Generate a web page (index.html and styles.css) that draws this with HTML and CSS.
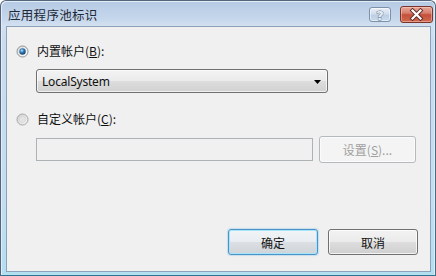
FILE: index.html
```html
<!DOCTYPE html>
<html>
<head>
<meta charset="utf-8">
<link rel="stylesheet" href="styles.css">
</head>
<body>
<div class="window">
  <div class="titlebar">
    <span class="title">应用程序池标识</span>
    <div class="caption-btns">
      <div class="cap help">
        <svg width="22" height="15" viewBox="0 0 22 15"><text x="11" y="12.5" text-anchor="middle" class="qmark">?</text></svg>
      </div>
      <div class="cap close">
        <svg width="33" height="17" viewBox="0 0 33 17"><path d="M12.5 4.5 L20.5 12.5 M20.5 4.5 L12.5 12.5" stroke="#5a2a24" stroke-width="4" stroke-linecap="square"/><path d="M12.5 4.5 L20.5 12.5 M20.5 4.5 L12.5 12.5" stroke="#ffffff" stroke-width="2.2" stroke-linecap="square"/></svg>
      </div>
    </div>
  </div>
  <div class="client">
    <div class="opt-row first">
      <svg class="radio" width="13" height="13" viewBox="0 0 13 13">
        <defs>
          <linearGradient id="rbg" x1="0" y1="0" x2="1" y2="1"><stop offset="0" stop-color="#d9d9d9"/><stop offset="1" stop-color="#ffffff"/></linearGradient>
          <radialGradient id="dot" cx="0.4" cy="0.35" r="0.7"><stop offset="0" stop-color="#bfe3f7"/><stop offset="0.45" stop-color="#2d76b5"/><stop offset="1" stop-color="#153e67"/></radialGradient>
        </defs>
        <circle cx="6.5" cy="6.5" r="5.5" fill="url(#rbg)" stroke="#8e9093"/>
        <circle cx="6.5" cy="6.5" r="3.2" fill="url(#dot)"/>
      </svg>
      <span class="label">内置帐户(<u>B</u>):</span>
    </div>
    <div class="combo">
      <span class="combo-text">LocalSystem</span>
      <svg width="7" height="4" viewBox="0 0 7 4"><path d="M0 0 H7 L3.5 4 Z" fill="#000"/></svg>
    </div>
    <div class="opt-row second">
      <svg class="radio" width="13" height="13" viewBox="0 0 13 13">
        <defs>
          <linearGradient id="rbg2" x1="0" y1="0" x2="1" y2="1"><stop offset="0" stop-color="#cfcfcf"/><stop offset="1" stop-color="#fafafa"/></linearGradient>
        </defs>
        <circle cx="6.5" cy="6.5" r="5.5" fill="url(#rbg2)" stroke="#a3a5a8"/>
        <circle cx="6.5" cy="6.5" r="3.2" fill="#e4e4e4" stroke="#d0d0d0" stroke-width="0.6"/>
      </svg>
      <span class="label">自定义帐户(<u>C</u>):</span>
    </div>
    <div class="custom-row">
      <div class="textbox"></div>
      <div class="btn disabled">设置(<u>S</u>)...</div>
    </div>
    <div class="footer">
      <div class="btn default">确定</div>
      <div class="btn">取消</div>
    </div>
  </div>
</div>
</body>
</html>
```

FILE: styles.css
```css
html, body {
  margin: 0;
  padding: 0;
  background: #ffffff;
}

.window {
  width: 436px;
  height: 276px;
  box-sizing: border-box;
  display: flex;
  flex-direction: column;
  border: 1px solid #53667d;
  border-bottom-color: #2c7496;
  border-radius: 6px 6px 0 0;
  padding: 0 4px 3px 5px;
  background: linear-gradient(to bottom, #b5cae4 0px, #c6d7ec 18px, #d3e1f1 25px, #cadcef 40px, #c3def0 200px, #b2e0f0 100%);
  box-shadow: inset 1px 1px 0 #e4edf7, inset -1px 0 0 #d6eef7;
  font-family: "Noto Sans CJK SC", "Noto Sans", sans-serif;
  font-size: 12px;
  color: #111;
}

.titlebar {
  height: 25px;
  display: flex;
  align-items: center;
  justify-content: space-between;
  padding-left: 2px;
  margin-right: -2px;
}

.title {
  font-size: 12.5px;
  color: #1e2a38;
  letter-spacing: 0.3px;
  margin-top: 1px;
}

.caption-btns {
  display: flex;
  align-items: center;
  gap: 9px;
  margin-top: 2px;
}

.cap {
  box-sizing: border-box;
  border-radius: 3px;
  display: flex;
}

.cap svg {
  display: block;
}

.help {
  width: 22px;
  height: 15px;
  border: 1px solid #7d91aa;
  background: linear-gradient(to bottom, #e7eef7 0%, #d2deec 45%, #bccfe5 55%, #c9daee 100%);
  box-shadow: inset 0 0 0 1px rgba(255,255,255,0.5);
}

.help svg {
  margin: -1px;
}

.qmark {
  font-family: "DejaVu Sans", sans-serif;
  font-size: 13px;
  font-weight: bold;
  fill: #e6edf6;
  stroke: #6a7a8e;
  stroke-width: 0.9px;
  paint-order: stroke;
}

.close {
  width: 33px;
  height: 17px;
  border: 1px solid #7b3329;
  background: linear-gradient(to bottom, #e8a597 0%, #d7806f 40%, #c4503b 52%, #cf6a4f 100%);
  box-shadow: inset 0 0 0 1px rgba(255,220,210,0.45);
}

.close svg {
  margin: -1px;
}

.client {
  flex: 1;
  display: flex;
  flex-direction: column;
  background: #f0f0f0;
  border: 1px solid #8da1b8;
  padding: 0 12px 16px 9px;
}

.opt-row {
  display: flex;
  align-items: center;
  height: 16px;
  gap: 8px;
}

.opt-row.first {
  margin-top: 16px;
}

.opt-row.second {
  margin-top: 18px;
}

.radio {
  display: block;
}

.label {
  line-height: 16px;
}

u {
  text-decoration: underline;
  text-underline-offset: 1px;
}

.combo {
  margin-top: 10px;
  margin-left: 20px;
  width: 292px;
  height: 24px;
  box-sizing: border-box;
  border: 1px solid #707070;
  border-radius: 3px;
  background: linear-gradient(to bottom, #f3f3f3 0%, #ebebeb 48%, #dddddd 52%, #d1d1d1 100%);
  box-shadow: inset 0 0 0 1px rgba(255,255,255,0.7);
  display: flex;
  align-items: center;
  justify-content: space-between;
  padding: 0 6px 0 5px;
}

.combo-text {
  font-family: "Noto Sans", sans-serif;
  font-size: 12px;
  letter-spacing: -0.2px;
}

.combo svg {
  display: block;
  margin-top: 1px;
}

.custom-row {
  margin-top: 9px;
  margin-left: 20px;
  display: flex;
  align-items: center;
  gap: 6px;
  height: 27px;
}

.textbox {
  width: 277px;
  height: 23px;
  box-sizing: border-box;
  border: 1px solid #adb2b5;
  background: #f0f0f0;
}

.btn {
  box-sizing: border-box;
  height: 26px;
  width: 90px;
  border: 1px solid #707070;
  border-radius: 3px;
  background: linear-gradient(to bottom, #f2f2f2 0%, #ebebeb 48%, #dddddd 52%, #cfcfcf 100%);
  box-shadow: inset 0 0 0 1px rgba(255,255,255,0.75);
  display: flex;
  align-items: center;
  justify-content: center;
  font-size: 12px;
  color: #111;
}

.btn.disabled {
  width: 97px;
  height: 27px;
  border-color: #b5b9bc;
  background: #f4f4f4;
  box-shadow: inset 0 0 0 1px #fbfbfb;
  color: #a0a0a0;
}

.btn.default {
  border-color: #4a93c6;
  box-shadow: inset 0 0 0 1px #a9e4fb, 0 0 1px 1px rgba(120,190,230,0.35);
  background: linear-gradient(to bottom, #f1f4f7 0%, #e9edf1 48%, #dbdfe3 52%, #cfd4d9 100%);
}

.footer {
  margin-top: auto;
  display: flex;
  justify-content: flex-end;
  gap: 10px;
}
```
